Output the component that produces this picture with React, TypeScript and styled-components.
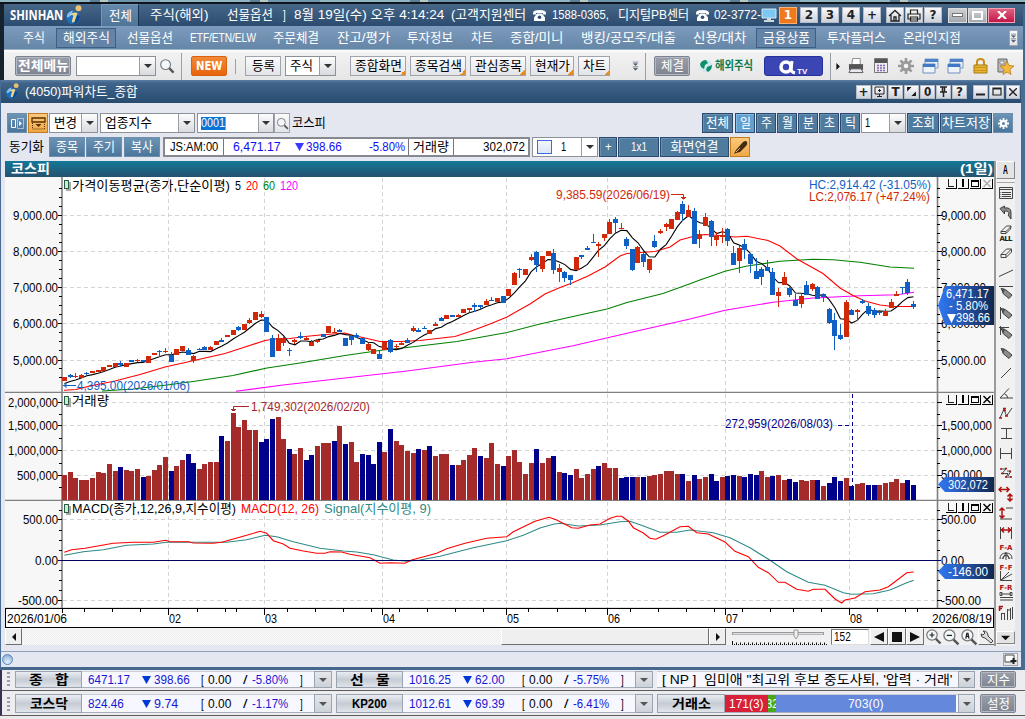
import React, { useLayoutEffect, useRef, useState } from 'react';
import styled, { createGlobalStyle, css } from 'styled-components';

const Global = createGlobalStyle`
  * { box-sizing: border-box; }
  html, body { margin: 0; padding: 0; background: #5f7f95; }
  body { overflow: hidden; font-family: 'Liberation Sans Narrow', 'Liberation Sans', 'Noto Sans CJK KR', sans-serif; font-size: 13px; color: #000; }
  svg { display: block; flex: none; }
`;

/* ---------- text ---------- */
const FitBox = styled.span<{ $w: number; $ml?: number; $c?: string; $b?: boolean; $size?: number }>`
  display: block; flex: none; width: ${p => p.$w}px; margin-left: ${p => p.$ml || 0}px; white-space: pre; line-height: 16px; height: 16px;
  ${p => p.$c && css`color: ${p.$c};`}
  ${p => p.$b && css`font-weight: 700;`}
  ${p => p.$size && css`font-size: ${p.$size}px;`}
`;
const FitInner = styled.span`display: inline-block; transform-origin: 0 50%;`;

type FitProps = { w: number; ml?: number; c?: string; b?: boolean; size?: number; children: string };
function Fit({ w, ml, c, b, size, children }: FitProps) {
  const ref = useRef<HTMLSpanElement>(null);
  const [scale, setScale] = useState(1);
  useLayoutEffect(() => {
    if (ref.current && ref.current.offsetWidth) setScale(w / ref.current.offsetWidth);
  }, [w, children]);
  return (
    <FitBox $w={w} $ml={ml} $c={c} $b={b} $size={size}>
      <FitInner ref={ref} style={{ transform: `scaleX(${scale})` }}>{children}</FitInner>
    </FitBox>
  );
}

/* ---------- shared parts ---------- */
type Box = { $w: number; $ml?: number; $h?: number };
const box = css<Box>`flex: none; width: ${p => p.$w}px; margin-left: ${p => p.$ml || 0}px; height: ${p => p.$h || 20}px;`;
const center = css`display: flex; align-items: center; justify-content: center;`;
const Space = styled.div<{ $w: number }>`flex: none; width: ${p => p.$w}px;`;

const Page = styled.div`width: 1025px; height: 719px; overflow: hidden; display: flex; flex-direction: column; background: #e9e9ee;`;
const Desktop = styled.div`height: 4px; flex: none; border-bottom: 2px solid #10151c; background: repeating-linear-gradient(90deg, #8fb4c2 0 90px, #5d7f95 90px 100px, #b9c7c2 100px 108px, #6f95ac 108px 160px);`;
const AppFrame = styled.div`height: 76px; flex: none; border-left: 4px solid #17222f; border-right: 2px solid #46688c;`;
const HeaderBar = styled.div`height: 22px; display: flex; align-items: center; padding-left: 6px; color: #fff; background: linear-gradient(#476788, #2b4c70);`;
const Logo = styled.div`width: 56px; flex: none; font-family: 'Open Sans', 'Noto Sans', sans-serif;`;
const ActiveTab = styled.div<Box>`${box} ${center} background: linear-gradient(#6489ac, #4f7599); border: 1px solid #7698b8; border-right-color: #152f4c; border-bottom: 0;`;
const SquareButton = styled.div<Box & { $hot?: boolean }>`${box} ${center} font-weight: 700; font-size: 12px; font-family: 'DejaVu Sans', sans-serif; color: ${p => (p.$hot ? '#fff' : '#222')}; border: 1px solid ${p => (p.$hot ? '#ffb070' : '#b5bcc9')}; background: ${p => (p.$hot ? '#ef7a1e' : 'linear-gradient(#fafafc, #cdd1da)')};`;
const WindowButton = styled.div<Box & { $close?: boolean }>`${box} ${center} border: 1px solid ${p => (p.$close ? '#f2a0b4' : '#dcdcdc')}; background: ${p => (p.$close ? 'linear-gradient(#e06080, #c01848)' : 'linear-gradient(#cfd2d6, #a2a8b0)')};`;

const MenuBar = styled.div`height: 24px; display: flex; align-items: center; color: #fff; background: linear-gradient(#7d9cbd, #6686a7); border-bottom: 1px solid #9db4ca;`;
const MenuBox = styled.div<Box>`${box} ${center} border: 1px solid #3d5f86; background: #6384a6;`;
const ToolBar = styled.div`height: 30px; display: flex; align-items: center; background: linear-gradient(#f2f2f2, #e6e6e6); border-top: 2px solid #fafafa;`;
const GreyButton = styled.div<Box>`${box} ${center} border: 1px solid #7d8491; border-radius: 2px; background: linear-gradient(#9a9fab, #7e8490); color: #fff; box-shadow: inset 0 0 0 1px #b4b8c2;`;
const NewButton = styled.div<Box>`${box} ${center} border: 1px solid #d9600f; background: linear-gradient(#f28a38, #e8640c); border-radius: 2px; font-family: 'DejaVu Sans', sans-serif;`;
const LightButton = styled.div<Box & { $corner?: boolean }>`${box} ${center} border: 1px solid #a0a4ae; background: linear-gradient(#fbfbfb, #e2e4e8);
  ${p => p.$corner && css`background: linear-gradient(135deg, transparent 0 50%, #e88a20 50%) right bottom / 5px 5px no-repeat, linear-gradient(#fbfbfb, #e2e4e8);`}`;
const Combo = styled.div<Box>`${box} display: flex; align-items: center; border: 1px solid #8c9097; background: #fff;`;
const Selected = styled.div`margin-left: 3px; background: #0a74d4; height: 13px; display: flex; align-items: center; border-right: 1px solid #e89040;`;
const Drop = styled.div<{ $flat?: boolean; $w?: number }>`${center} flex: none; width: ${p => p.$w || 16}px; height: 100%; margin-left: auto; border-left: 1px solid #9a9da5; background: ${p => (p.$flat ? '#fff' : 'linear-gradient(#fdfdfd, #d8dade)')};
  &::after { content: ''; border: 4px solid transparent; border-top: 4px solid #333; border-bottom: 0; }`;
const Divider = styled.div<Box>`${box} background: #9b9fa8;`;
const LogoTv = styled.div<Box>`${box} ${center} border-radius: 3px; border: 1px solid #24309c; background: #3b46b4;`;

/* ---------- chart window ---------- */
const Win = styled.div`height: 590px; flex: none; border-left: 1px solid #4a6c92; border-right: 4px solid #4a6c92; border-bottom: 3px solid #46688c; background: #e4e7ef; display: flex; flex-direction: column;`;
const WinTitle = styled.div`height: 23px; flex: none; display: flex; align-items: center; padding-left: 5px; color: #fff; background: linear-gradient(#5b7fa3, #41648a 3px, #284b70);`;
const Controls = styled.div<{ $h: number; $pt: number }>`height: ${p => p.$h}px; flex: none; padding-top: ${p => p.$pt}px; display: flex; align-items: flex-start;`;
const BlueButton = styled.div<Box & { $on?: boolean }>`${box} ${center} color: #fff; border: 1px solid #2c4a70; background: ${p => (p.$on ? '#62a0d0' : '#4f7b9f')}; box-shadow: inset 1px 1px 0 ${p => (p.$on ? '#86bbe4' : '#6890b0')};`;
const SoftButton = styled.div<Box>`${box} ${center} color: #fff; border: 1px solid #6d8fae; background: linear-gradient(#6c93b4, #4b769b);`;
const OrangeButton = styled.div<Box>`${box} ${center} border: 1px solid #c07c1e; background: linear-gradient(#fbc97c, #f0a848);`;
const QuoteBox = styled.div<Box>`${box} display: flex; align-items: center; border: 2px solid #868a90; background: #fff;`;
const QuoteCell = styled.div<{ $w: number; $last?: boolean }>`flex: none; width: ${p => p.$w}px; display: flex; align-items: center; height: 100%; border-right: ${p => (p.$last ? 0 : 1)}px solid #777;`;
const Swatch = styled.div`width: 15px; height: 14px; margin-left: 4px; border: 1px solid #3a6fe0; background: linear-gradient(#f4f6fb, #dde5f4);`;
const Lead = styled.div<Box>`${box} display: flex; align-items: center;`;

const Workspace = styled.div`display: flex; flex: none; height: 485px; padding-left: 4px;`;
const ChartColumn = styled.div`width: 989px; flex: none; display: flex; flex-direction: column;`;
const ChartTitle = styled.div`height: 16px; flex: none; display: flex; align-items: center; padding-left: 6px; color: #fff; background: linear-gradient(#147898, #25526f);`;
const ScrollRow = styled.div`height: 17px; display: flex; align-items: center; background: #f0f0f2;`;
const Raised = styled.div<Box>`${box} ${center} background: #efefef; border: 1px solid #fff; border-right-color: #6e6e6e; border-bottom-color: #6e6e6e;`;
const Track = styled.div<Box>`${box} background: repeating-conic-gradient(#fafafa 0 25%, #ededed 0 50%) 0 0 / 2px 2px;`;
const CountBox = styled.div<Box>`${box} display: flex; align-items: center; background: #fff; border: 1px solid #777; border-right-color: #ddd; border-bottom-color: #ddd;`;
const ToolStrip = styled.div`width: 21px; display: flex; flex-direction: column; align-items: center; background: #f1f1f1; border-left: 2px solid #9a9a9a;`;
const ToolCell = styled.div<{ $h: number }>`${center} height: ${p => p.$h}px; width: 19px; flex: none;`;
const StripButton = styled.div<{ $h: number }>`${center} height: ${p => p.$h}px; width: 19px; flex: none; background: #e4e4e4; border: 1px solid #fff; border-right-color: #888; border-bottom-color: #888;`;
const Rule = styled.div`height: 1px; width: 18px; background: #a8a8a8; flex: none;`;
const StatusBar = styled.div`flex: 1; margin-top: 5px; border-top: 1px solid #8da2ba; display: flex; align-items: center;`;
const Orb = styled.div`width: 11px; height: 11px; margin-left: 1px; border-radius: 50%; border: 1px solid #5b86b8; background: radial-gradient(circle at 50% 80%, #e8f3ff, #7ba5d2);`;

/* ---------- tickers ---------- */
const Ticker = styled.div<{ $h: number }>`height: ${p => p.$h}px; flex: none; display: flex; align-items: flex-end; padding-bottom: 2px; background: #ececf1; border-left: 2px solid #3a3050; padding-left: 3px; border-bottom: 1px solid #5d5d57;`;
const Grip = styled.div`width: 3px; height: 15px; margin: 0 0 1px 2px; flex: none; background: repeating-linear-gradient(#9a9da2 0 2px, transparent 2px 4px);`;
const TickerLabel = styled.div<Box>`${box} ${center} border: 1px solid #9aa3b0; background: linear-gradient(#e9edf2, #c6ccd5 50%, #e0e4ea);`;
const TickerBody = styled.div<Box>`${box} display: flex; align-items: center; background: #f6f7ff; border-top: 1px solid #c9ced8; border-bottom: 1px solid #a9b0bc;`;
const TickerDrop = styled.div<Box>`${box} ${center} border: 1px solid #9aa3b0; background: linear-gradient(#e4e7eb, #cdd2d9);
  &::after { content: ''; border: 4px solid transparent; border-top: 4px solid #555; border-bottom: 0; }`;
const Share = styled.div<{ $w: number; $bg: string }>`flex: none; width: ${p => p.$w}px; ${center} height: 100%; overflow: hidden; background: ${p => p.$bg}; color: #fff;`;

/* ---------- small drawings ---------- */
const ShinhanMark = ({ s }: { s: number }) => (
  <svg width={s} height={s * 1.25} viewBox="0 0 16 20">
    <circle cx="7" cy="12.500" r="6.800" fill="#1d6fc0" />
    <path d="M1 10q2-4 6-4.500l-2 5q-2 2-4 2z" fill="#7fc0ee" /><path d="M7 19q6-1 7-8l-3-1-3 6z" fill="#0d4890" />
    <path d="M4 9.500q4-3 7.500-1.500L8.500 17q-3 1.500-2.500-1.500l1.500-5z" fill="#f0d488" /><circle cx="12.500" cy="3.300" r="3" fill="#e8c274" />
  </svg>
);
const Magnifier = ({ s = 17, sign }: { s?: number; sign?: string }) => (
  <svg width={s} height={s} viewBox="0 0 17 17">
    <path d="M10 10l5.500 5.500" stroke="#555" strokeWidth="2.400" />
    <circle cx="7" cy="7" r="5.200" fill="#f3f8fc" stroke="#777" strokeWidth="1.200" />
    {sign && <path d={sign} stroke="#222" strokeWidth="1.200" fill="none" />}
  </svg>
);
const Gear = ({ c, s = 16, hole = '#eee' }: { c: string; s?: number; hole?: string }) => (
  <svg width={s} height={s} viewBox="0 0 16 16">
    <path d="M8 0v16M0 8h16M2.400 2.400l11.200 11.200M2.400 13.600L13.600 2.400" stroke={c} strokeWidth="2.600" />
    <circle cx="8" cy="8" r="5.200" fill={c} /><circle cx="8" cy="8" r="2.300" fill={hole} />
  </svg>
);
const Arrow = ({ d, s = 10 }: { d: string; s?: number }) => <svg width={s} height={s} viewBox="0 0 10 10"><path d={d} fill="#111" /></svg>;
const Chevrons = ({ c = '#4a5a70' }) => <svg width="7" height="10" viewBox="0 0 9 12"><path d="M1 1h7M2 3h5L4.500 5.500zM1 7h7M2 9h5L4.500 11.500z" stroke={c} strokeWidth=".8" fill={c} /></svg>;
const Phone = () => (
  <svg width="13" height="12" viewBox="0 0 13 12"><path d="M0 4q0-3 6.500-3T13 4v1.500h-3V4H3v1.500H0zM4 4.500h5l3 4V12H1V8.500z" fill="#fff" /><circle cx="6.500" cy="8.300" r="1.800" fill="#2f5074" /></svg>
);
const WindowsIcon = () => (
  <svg width="17" height="16" viewBox="0 0 17 16"><path d="M3 1h13v9H3z" fill="#e8eef6" stroke="#7f9dc4" /><path d="M3 1h13v3H3z" fill="#4f83c8" /><path d="M1 6h12v9H1z" fill="#eef3f9" stroke="#6f90bd" /><path d="M1 6h12v3H1z" fill="#3f78c4" /></svg>
);

/* ---------- chart data ---------- */
type Pt = [number, number];
const COUNT = 152;
const barX = (i: number) => 64.4 + 5.6235 * i;

/* colour, body top, body bottom, wick top, wick bottom; in thirds of a pixel below y = 160 */
const candleText = `r 651 662,b 646 650 641 654,r 647 651 638 654,r 645 653 642 654,b 638 641 635 645,r 632 638,r 629 636,r 621 633,r 614 621,r 609 621,b 608 614 604 621,r 609 620,b 599 605,r 599 603 596 606,b 599 605,r 588 608,r 579 585,b 573 577 570 591,r 572 577 564 579,b 585 606 575 606,r 566 586,r 558 572,b 570 584 563 584,r 588 602 585 608,b 567 571 564 571,b 561 570 558 570,r 561 570 558 570,r 543 555,b 541 546 534 546,r 525 531,r 510 525,b 501 510 497 513,r 492 510,r 479 488 474 491,r 456 480,r 461 471 453 474,b 471 516,b 534 591 525 591,r 534 573 522 573,r 534 549 531 558,b 570 574 563 588,r 540 547 536 552,b 528 534 516 537,r 534 540 531 540,r 546 557 540 557,r 540 546 537 549,b 522 531,r 498 519,r 515 519 504 519,b 510 516 507 516,b 534 558,b 527 539 524 555,b 525 530 519 533,b 534 552,r 552 570 549 573,r 567 582,b 582 597 573 597,r 545 569,b 540 576 537 579,r 557 561 551 566,r 549 554 545 554,b 541 550 534 550,r 504 512 497 515,b 509 516 505 516,b 504 508 498 508,r 510 521,r 491 497 486 497,b 474 483 471 483,r 465 477,b 465 470,r 465 470 461 470,r 447 459,r 444 450 444 456,b 435 440 429 455,b 436 441 435 448,r 423 435 417 435,b 420 423 411 423,r 414 426,b 408 429,r 387 408,r 339 375 335 375,b 326 330 324 354,r 327 345,r 291 300 282 303,b 276 315 273 336,r 288 327 288 336,r 273 288,b 279 330 267 342,r 324 336 312 366,b 336 354 333 366,b 345 360 345 375,r 291 329,b 285 292 285 297,b 264 270 258 270,b 246 249 222 249,r 252 258 246 291,r 222 234 222 243,r 186 222 177 222,b 177 189 170 219,r 204 208 189 208,b 237 258 231 267,b 267 330 267 333,r 261 309 258 309,b 282 306 273 321,r 297 330 297 339,b 243 261 225 264,r 213 218 207 222,r 192 201 189 213,r 177 207,r 156 180 153 180,b 132 162 123 184,r 150 171 135 171,b 153 252 144 252,r 222 237 210 264,r 171 198 160 198,b 182 231 180 258,r 228 240 216 258,r 224 230 204 249,b 207 243 204 258,b 279 315 258 315,r 264 303 258 339,b 252 270 237 297,b 282 312 279 339,b 333 357 294 357,b 327 351 321 375,b 321 333 300 333,b 336 405 324 405,r 396 408 384 441,r 351 375 336 375,b 384 405 381 411,b 420 438 402 438,r 408 432 399 444,b 375 405 363 405,r 372 387 369 393,b 381 417 378 417,b 402 412 402 426,b 447 489 444 492,b 480 528 459 570,b 525 537 492 540,r 426 531 420 531,b 450 465 447 465,r 451 455 447 482,b 423 428 417 432,b 438 462 429 468,b 450 465 444 474,b 455 459 450 465,r 453 468 447 468,r 426 444 417 444,r 402 407 393 407,b 381 385 381 402,b 366 399 357 405,b 432 441 423 447`;
const candles = candleText.split(',').map(t => {
  const [c, ...n] = t.split(' ');
  const [a, b, h = a, l = b] = n.map(Number);
  const y = (v: number) => 160 + v / 3;
  return { up: c === 'r', top: Math.round(y(a)), bottom: Math.max(Math.round(y(b)), Math.round(y(a)) + 1), high: Math.round(y(h)), low: Math.round(y(l)) };
});

/* bar tops in thirds of a pixel below y = 390; "b" marks a falling session */
const volumes = `255 246 264 270 270 264 246 249 222 243 231b 240 243 237 261b 258 240 225 201 243b 228 210 192b 219b 237 222 216 216 138b 153 69 111 90 120 120 156b 147b 87b 81 147 177b 192 174 210b 195b 168 159 159 153b 108 162b 156 216 192b 195b 222b 156b 186 117b 153 165 183 189 177b 180 168b 198 192 192 225b 225 210 195 174 198b 204 159 222 228b 198 180 216 252 219 177b 219 204 198b 246 249b 255b 237 264 252 237 228b 219 234 234 264b 261b 261b 261 261b 258 255 252 243 243 252 252b 273 255b 267 261 252b 273b 261 258b 255b 258 261b 252b 255b 243 261 258b 255 270 267b 276b 270 273 270 270b 288 279b 261b 273b 264 288b 282 279 285b 285b 285 279 276 267 279 270b 285b`
  .split(' ').map(t => ({ down: t.endsWith('b'), top: Math.round(390 + parseInt(t, 10) / 3) }));

const seg = (dx: number, dy: number, flat: number[]): Pt[] => {
  const out: Pt[] = [];
  for (let i = 0; i < flat.length; i += 2) out.push([dx + flat[i] / 3, dy + flat[i + 1] / 3]);
  return out;
};
const px = (...flat: number[]) => { const out: Pt[] = []; for (let i = 0; i < flat.length; i += 2) out.push([flat[i], flat[i + 1]]); return out; };
const closes = candles.map(c => (c.up ? c.top : c.bottom));
const ma5: Pt[] = closes.map((_, i) => [barX(i), i < 4 ? [383.5, 381.5, 380, 378][i] : closes.slice(i - 4, i + 1).reduce((a, b) => a + b, 0) / 5]);
const ma20 = px(64, 390.3, 76, 389.5, 90, 386, 115, 381, 140, 374.5, 165, 367, 183, 363, 205, 358, 225, 353.5, 245, 347, 265, 340.5, 275, 339, 290, 338.5, 305, 336.5, 320, 335, 333, 334, 345, 333, 352, 335, 365, 338, 380, 341.5, 400, 341.5, 420, 340.5, 437, 338.5, 455, 336.5, 470, 331.5, 490, 324, 507, 317, 530, 304, 545, 294, 560, 287.5, 572, 283, 588, 276, 605, 267, 620, 256, 627, 253.5, 640, 252.5, 655, 251.5, 670, 247, 680, 240, 693, 236.5, 705, 234.5, 725, 236, 735, 237, 747, 236.3, 768, 240.5, 780, 246, 797, 259, 823, 273.5, 840, 288, 853, 295.5, 865, 301, 880, 305, 893, 306.5, 914, 306.5);
const ma60 = px(102, 391, 133, 389, 167, 385, 193, 381.5, 233, 375.5, 267, 368, 300, 363, 345, 355.5, 383, 350, 407, 347.5, 457, 341.5, 507, 332.5, 540, 324, 573, 316.5, 607, 309, 627, 302.5, 663, 293.5, 690, 283.8, 700, 280, 725, 271.3, 747, 266, 780, 261.3, 813, 259.3, 833, 259.7, 860, 262.3, 890, 267, 914, 268.3);
const ma120 = px(236, 391.3, 283, 385, 345, 378, 407, 371, 473, 362.3, 507, 358.7, 573, 345.7, 627, 333.3, 690, 319, 725, 310.3, 773, 302.3, 813, 298, 860, 295.7, 897, 294.7, 914, 292.3);
const macd = [
  ...seg(0, 390, [193, 487, 215, 479, 255, 475, 340, 460, 400, 457, 460, 457, 497, 451, 510, 455, 565, 455, 580, 459, 640, 460, 665, 457, 700, 447, 740, 436, 780, 424, 800, 430, 820, 452, 850, 462, 870, 475, 910, 483, 950, 490, 975, 490, 990, 485, 1025, 486]),
  ...seg(340, 390, [30, 493, 90, 503, 120, 520, 150, 518, 195, 520, 215, 510, 290, 490, 320, 476, 375, 460, 440, 445, 500, 440, 520, 425, 585, 394, 627, 382, 650, 390, 695, 413, 715, 415, 750, 405, 780, 402, 810, 385, 830, 379, 845, 379, 865, 393, 880, 413, 910, 429, 930, 445, 947, 448, 970, 437, 1020, 410]),
  ...seg(680, 390, [25, 409, 50, 428, 85, 432, 135, 456, 165, 484, 205, 500, 235, 532, 265, 548, 295, 577, 315, 577, 350, 598, 385, 604, 400, 598, 435, 598, 465, 627, 485, 639, 495, 630, 525, 624, 555, 605, 600, 600, 625, 590, 645, 575, 680, 548, 701, 546]),
];
const signal = [
  ...seg(0, 390, [193, 496, 250, 485, 310, 479, 380, 466, 460, 462, 500, 457, 680, 457, 740, 449, 795, 436, 830, 440, 880, 455, 960, 475, 1030, 483]),
  ...seg(340, 390, [50, 486, 100, 494, 160, 510, 200, 514, 240, 510, 300, 499, 400, 473, 500, 452, 550, 436, 600, 414, 640, 403, 660, 400, 715, 408, 780, 405, 840, 395, 870, 394, 900, 404, 960, 427, 1010, 427]),
  ...seg(680, 390, [30, 420, 100, 428, 150, 443, 210, 473, 270, 511, 320, 545, 385, 577, 435, 586, 490, 608, 515, 613, 580, 611, 630, 600, 680, 578, 701, 571]),
];
const line = (pts: Pt[]) => pts.map(p => p.map(v => v.toFixed(1)).join(',')).join(' ');
const months: [number, string][] = [[168.5, '02'], [264.5, '03'], [382.5, '04'], [506.5, '05'], [607.5, '06'], [725.5, '07'], [849.5, '08']];

const L = ({ x, y, w, c = '#000', children }: { x: number; y: number; w: number; c?: string; children: string }) => (
  <text x={x} y={y} fill={c} fontSize="13" textLength={w} lengthAdjust="spacingAndGlyphs" xmlSpace="preserve">{children}</text>
);

function PaneFrame({ top, bottom, grid, minor, grey }: { top: number; bottom: number; grid: number[]; minor: number[]; grey?: boolean }) {
  return (
    <g>
      <rect x="5" y={top} width="989" height={bottom - top} fill="#fff" />
      <rect x="5" y={top} width="57" height={bottom - top} fill="#f7f7f7" />
      <rect x="938" y={top} width="56" height={bottom - top} fill="#f7f7f7" />
      <g stroke="#d3d3d3" strokeDasharray="4 3" shapeRendering="crispEdges">
        {months.map(([x]) => <path key={x} d={`M${x} ${top + 1}V${bottom}`} />)}
        {grid.map(y => <path key={y} d={`M63 ${y}H937`} />)}
      </g>
      <path d={`M62 ${top}V${bottom}M937.500 ${top}V${bottom}`} stroke="#808080" strokeWidth="1.600" />
      <path d={[...grid.map(y => `M58 ${y}h4M937 ${y}h5`), ...minor.map(y => `M59 ${y}h3M937 ${y}h3`)].join('')} stroke="#000" shapeRendering="crispEdges" />
      <path d={`M5 ${bottom - 0.5}H994`} stroke="#808080" strokeWidth="1.600" />
      {[945.5, 957.5, 969.5, 981.5].map((x, i) => {
        const y = top + 2;
        return (
          <g key={x} fill="none" shapeRendering="crispEdges">
            <path d={`M${x} ${y + 9.5}h11v-10`} stroke="#000" />
            {i === 0 && <path d={`M${x + 3} ${y}v7.500h5`} stroke="#222" />}
            {i === 1 && <path d={`M${x + 5} ${y}v8`} stroke="#000" strokeWidth="2" />}
            {i === 2 && <path d={`M${x + 2} ${y + 1}h7v6.500h-7zM${x + 2} ${y + 2}h7`} stroke="#000" />}
            {i === 3 && <path d={`M${x + 2} ${y + 1}l7 7m0-7l-7 7`} stroke={grey ? '#aaa' : '#000'} strokeWidth="1.400" shapeRendering="auto" />}
          </g>
        );
      })}
      <rect x="66" y={top + 5} width="5" height="9" fill="#aaa" />
      <rect x="64.500" y={top + 3.5} width="4" height="8" fill="#bff5c4" stroke="#2d5a4c" />
    </g>
  );
}

const ticks = (from: number, to: number, step: number) => { const r: number[] = []; for (let v = from; v < to; v += step) r.push(v); return r; };
const priceGrid = [215.5, 251.5, 287.5, 323.5, 360.5];

function PriceTag({ top, bottom, id }: { top: number; bottom: number; id: string }) {
  const mid = (top + bottom) / 2;
  return (
    <g>
      <defs><linearGradient id={id}><stop offset="0" stopColor="#2f78f4" /><stop offset=".3" stopColor="#2a63c8" /><stop offset="1" stopColor="#11264c" /></linearGradient></defs>
      <path d={`M938 ${mid}L945 ${top}H994V${bottom}H945z`} fill={`url(#${id})`} />
    </g>
  );
}

function PricePane() {
  return (
    <svg width="989" height="216" viewBox="5 177 989 216">
      <PaneFrame top={177} bottom={393} grid={priceGrid} minor={ticks(188.5, 386, 9).filter(v => Math.min(...priceGrid.map(g => Math.abs(g - v))) > 2)} grey />
      {['9,000.00', '8,000.00', '7,000.00', '6,000.00', '5,000.00'].map((t, i) => {
        const y = [220, 256, 292, 328, 365][i];
        return <g key={t}><L x={13} y={y} w={45}>{t}</L><L x={941} y={y} w={45}>{t}</L></g>;
      })}
      <g fill="none" strokeWidth="1.100">
        <polyline points={line(ma120)} stroke="#f0f" />
        <polyline points={line(ma60)} stroke="#008000" />
        <polyline points={line(ma20)} stroke="#f00" />
        <polyline points={line(ma5)} stroke="#000" />
      </g>
      <g shapeRendering="crispEdges">
        {candles.map((c, i) => {
          const x = Math.round(barX(i) - 0.5);
          return (
            <g key={i} fill={c.up ? '#d02808' : '#1060c4'}>
              <rect x={x} y={c.high} width="1" height={c.low - c.high} />
              <rect x={x - 2} y={c.top} width="5" height={c.bottom - c.top} />
            </g>
          );
        })}
      </g>
      <L x={72} y={190} w={158}>가격이동평균(종가,단순이평)</L>
      <L x={235} y={190} w={6}>5</L><L x={246} y={190} w={12} c="#f00">20</L><L x={263} y={190} w={12} c="#008000">60</L><L x={280} y={190} w={18} c="#f0f">120</L>
      <L x={556} y={199} w={114} c="#d02808">9,385.59(2026/06/19)</L>
      <path d="M671 194.500h12.500v5M681 197.500h5M682 198.500h3" stroke="#d02808" fill="none" />
      <L x={809} y={189} w={122} c="#1060c4">HC:2,914.42 (-31.05%)</L>
      <L x={809} y={201} w={121} c="#d02808">LC:2,076.17 (+47.24%)</L>
      <L x={77} y={390} w={113} c="#1060c4">4,395.00(2026/01/06)</L>
      <path d="M63 385.500h13M66 383v5M65 384v3" stroke="#1060c4" fill="none" />
      <PriceTag top={286} bottom={325} id="tagPrice" />
      <L x={946} y={298} w={43} c="#fff">6,471.17</L><L x={949} y={310} w={39} c="#fff">- 5.80%</L>
      <path d="M947 314h9l-4.500 9z" fill="#fff" /><L x={956} y={322} w={34} c="#fff">398.66</L>
    </svg>
  );
}

function VolumePane() {
  return (
    <svg width="989" height="108" viewBox="5 393 989 108">
      <PaneFrame top={393} bottom={501} grid={[402.5, 425.5, 450.5, 475.5]} minor={[414.5, 438.5, 463.5, 487.5]} />
      <L x={8} y={407} w={50}>2,000,000</L><L x={8} y={430} w={50}>1,500,000</L><L x={8} y={455} w={50}>1,000,000</L><L x={17} y={480} w={41}>500,000</L>
      <L x={941} y={430} w={51}>1,500,000</L><L x={941} y={455} w={51}>1,000,000</L><L x={941} y={479} w={41}>500,000</L>
      <g shapeRendering="crispEdges">
        {volumes.slice(0, COUNT).map((v, i) => <rect key={i} x={Math.round(barX(i) - 0.5) - 2} y={v.top} width="5" height={500 - v.top} fill={v.down ? '#00008b' : '#a52a2a'} />)}
      </g>
      <L x={72} y={405} w={37}>거래량</L>
      <L x={251} y={411} w={119} c="#a52a2a">1,749,302(2026/02/20)</L>
      <path d="M249 406.500h-15.500v4M231 409.500h5M232 410.500h3" stroke="#a52a2a" fill="none" />
      <L x={725} y={428} w={108} c="#00008b">272,959(2026/08/03)</L>
      <path d="M838 425.500h15M852.500 394v92" stroke="#00008b" strokeDasharray="4 3" fill="none" />
      <PriceTag top={477} bottom={492} id="tagVolume" /><L x={948} y={489} w={40} c="#fff">302,072</L>
    </svg>
  );
}

function MacdPane() {
  return (
    <svg width="989" height="107" viewBox="5 501 989 107">
      <PaneFrame top={501} bottom={609} grid={[519.5, 600.5]} minor={[510.5, 530.5, 540.5, 550.5, 570.5, 580.5, 590.5]} />
      <L x={23} y={524} w={35}>500.00</L><L x={35} y={565} w={23}>0.00</L><L x={18} y={605} w={40}>-500.00</L>
      <L x={941} y={524} w={35}>500.00</L><L x={941} y={565} w={23}>0.00</L><L x={941} y={605} w={40}>-500.00</L>
      <g fill="none" strokeWidth="1.100">
        <polyline points={line(signal)} stroke="#2f8a86" />
        <polyline points={line(macd)} stroke="#f00" />
      </g>
      <path d="M58 560.500H941" stroke="#000060" />
      <L x={72} y={513} w={164}>MACD(종가,12,26,9,지수이평)</L><L x={241} y={513} w={78} c="#f00">MACD(12, 26)</L><L x={324} y={513} w={107} c="#2f8a86">Signal(지수이평, 9)</L>
      <PriceTag top={564} bottom={579} id="tagMacd" /><L x={948} y={576} w={40} c="#fff">-146.00</L>
    </svg>
  );
}

function TimeAxis() {
  const minor = [84, 112, 140, 197, 225, 236, 287, 315, 343, 371, 399, 427, 455, 483, 528, 557, 585, 630, 658, 686, 714, 742, 770, 793, 821, 877, 905, 917];
  return (
    <svg width="989" height="20" viewBox="5 608 989 20">
      <rect x="5.500" y="608.500" width="988" height="19" fill="#fff" stroke="#000" />
      <path d={[...minor.map(x => `M${x + 0.5} 609v3`), ...months.map(([x]) => `M${x} 609v6`), 'M62.500 609v4'].join('')} stroke="#000" />
      <L x={7} y={623} w={60}>2026/01/06</L>
      {months.map(([x, t]) => <L key={t} x={x + 0.5} y={623} w={12}>{t}</L>)}
      <L x={932} y={623} w={60}>2026/08/19</L>
    </svg>
  );
}

/* drawing tools, each on a 16px grid: dark strokes, red strokes, caption, grey body */
type Tool = { d?: string; r?: string; t?: string; f?: string };
const PEN = 'M4.500 4.500L8 5l6 5-3 3.500L5 8.500z';
const PEN_TIP = 'M3 3.500l3.500.500L5 7.500z';
const tools: Tool[] = [
  { d: 'M1.500 2.500h13v11h-13zM1 4.500h14M4 7.500h9M4 9.500h9M4 11.500h9M2.500 7.500h.8M2.500 9.500h.8M2.500 11.500h.8' },
  { f: 'M2 3.500L6.500 1v2q6-1 6.500 4v7l-3-4 1-1q0-3-4.500-3v3z' },
  { d: 'M3 6.500L8.500 1H13l-.5 3L8 8.500H3zM3 6.500h5l5-5M8 6.500v2', t: 'ALL' },
  { d: 'M3 9.500L8.500 4H13.500v3L8 12.500H3zM3 9.500h5l5.500-5.500M8 9.500v3' },
  { d: 'M1 11.500L15 5' },
  { d: `M1 1.500h14${PEN_TIP}`, f: PEN },
  { d: `M2.500 2v12${PEN_TIP}`, f: PEN },
  { d: `M1 2.500h10M2.500 1v9${PEN_TIP}`, f: PEN },
  { d: PEN_TIP, f: PEN },
  { d: 'M3 13L13 3' },
  { d: 'M11 3.500L2 13h13M6.500 9q3.500 1 3 4' },
  { d: 'M2 13l4-9 2.500 7L14 3', r: 'M1 13h3M5 3.500h3M7 11h3M5 5.500h3' },
  { d: 'M3 3.500h11M8.500 3v10M3 13.500h11' },
  { d: 'M2.500 3v11M13.500 3v11M2 8.500h12' },
  { d: 'M3 4h5L4 8.500h6L8 12h5M9 6h4l-3 5', r: 'M2 4h2M7 3.500h2M3 8.500h3M11 6.500h2M7 12h2M12 12h2' },
  { r: 'M1 4.500h10M3.500 2L1 4.500 3.500 7M8.500 2L11 4.500 8.500 7M12 9v7M9.500 11.500L12 9l2.500 2.500M9.500 13.500L12 16l2.500-2.500' },
  { d: 'M8 3h7M2 14h12', r: 'M4 3v10M1.500 5.500L4 3l2.500 2.500M1.500 10.500L4 13l2.500-2.500' },
  { d: 'M2.500 2v12M13.500 2v12', r: 'M3 5h10M6 2.500L3.500 5 6 7.500M10 2.500L12.500 5 10 7.500' },
  { d: 'M2 14q0-6 6-6t6 6M5 14q0-3.500 3-3.500t3 3.500M8 7v8M4 14l4-6 4 6', t: 'F-A' },
  { d: 'M2.500 6v9.500H14M3 15L14 9M3 15l8-8', t: 'F-F' },
  { d: 'M3 9h10M2 7.500v3h2v-3zM12 7.500v3h2v-3zM2 12.500h13M2 15h13', t: 'F-R' },
  { d: 'M3.500 8v7M6.500 8v7M9.500 4v11M12.500 3v12M14.500 2v12M3 8.500h3M9 5h3', r: 'M1.500 1v5M1 1.500h4M1 3.500h3' },
];

function ToolIcon({ tool: { d, r, t, f } }: { tool: Tool }) {
  const all = t === 'ALL';
  return (
    <svg width="16" height="18" viewBox="0 -1 16 18">
      {f && <path d={f} stroke="#333" strokeWidth=".9" fill="#8c8c8c" />}
      {d && <path d={d} stroke="#444" fill="none" strokeWidth="1" />}
      {r && <path d={r} stroke="#b01010" fill="none" strokeWidth="1.500" />}
      {t && <text x="1.500" y={all ? 16 : 5} fontSize="7" fontWeight="700" fill={all ? '#222' : '#b01010'} fontFamily="DejaVu Sans" textLength="13">{t}</text>}
    </svg>
  );
}

function Quote({ last, ml, lw, diff, diffW, rate }: { last: string; ml: number; lw: number; diff: string; diffW: number; rate: string }) {
  return (
    <>
      <Fit w={lw} ml={ml} c="#1818d0">{last}</Fit>
      <Space $w={54 - lw} />
      <svg width="9" height="8" viewBox="0 0 9 8"><path d="M0 0h9L4.500 8z" fill="#0038d8" /></svg>
      <Fit w={diffW} ml={3} c="#1818d0">{diff}</Fit>
      <Fit w={3} ml={47 - diffW}>[</Fit><Fit w={23} ml={4}>0.00</Fit><Fit w={5} ml={12}>/</Fit>
      <Fit w={36} ml={4} c="#1818d0">{rate}</Fit><Fit w={3} ml={12}>]</Fit>
    </>
  );
}

const periods: [string, number, number][] = [['일', 20, 2], ['주', 20, 1], ['월', 20, 1], ['분', 20, 1], ['초', 20, 1], ['틱', 20, 1]];
const menuItems: [string, number, number][] = [['선물옵션', 11, 46], ['ETF/ETN/ELW', 17, 66], ['주문체결', 17, 46], ['잔고/평가', 18, 53], ['투자정보', 17, 46], ['차트', 18, 22], ['종합/미니', 17, 53], ['뱅킹/공모주/대출', 18, 95], ['신용/대차', 17, 53]];
const shortcuts: [string, number, number][] = [['종합화면', 56, 14], ['종목검색', 56, 4], ['관심종목', 56, 4], ['현재가', 44, 4], ['차트', 32, 4]];

export default function App() {
  return (
    <Page>
      <Global />
      <Desktop />
      <AppFrame>
        <HeaderBar>
          <Logo><Fit w={53} b size={14}>SHINHAN</Fit></Logo>
          <ShinhanMark s={16} />
          <ActiveTab $w={38} $ml={19} $h={22}><Fit w={23}>전체</Fit></ActiveTab>
          <Fit w={59} ml={11}>주식(해외)</Fit><Fit w={46} ml={18}>선물옵션</Fit><Fit w={3} ml={10}>]</Fit>
          <Fit w={150} ml={8}>8월 19일(수) 오후 4:14:24</Fit><Fit w={75} ml={7}>(고객지원센터</Fit>
          <Space $w={7} /><Phone />
          <Fit w={57} ml={6}>1588-0365,</Fit><Fit w={71} ml={9}>디지털PB센터</Fit>
          <Space $w={7} /><Phone /><Fit w={47} ml={5}>02-3772-</Fit>
          <svg width="16" height="14" viewBox="0 0 16 14"><path d="M1 1h14v9H1z" fill="#7cc8f4" stroke="#d4e6f2" /><path d="M6 10h4v2h3v2H3v-2h3z" fill="#cdd6df" /></svg>
          <SquareButton $w={18} $ml={2} $h={17} $hot>1</SquareButton>
          {['2', '3', '4', '+'].map(t => <SquareButton key={t} $w={18} $ml={3} $h={16}>{t}</SquareButton>)}
          <SquareButton $w={18} $ml={5} $h={16}><svg width="14" height="13" viewBox="0 0 14 13"><path d="M1 7l6-5.500L13 7M3 6v6h8V6M6 12V8h2v4" fill="none" stroke="#222" strokeWidth="1.300" /></svg></SquareButton>
          <SquareButton $w={18} $ml={1} $h={16}><svg width="14" height="13" viewBox="0 0 14 13"><path d="M3.500 5V1h7v4M1 5h12v5H1zM3.500 8h7v4h-7z" fill="#eee" stroke="#222" strokeWidth="1.200" /></svg></SquareButton>
          <SquareButton $w={18} $ml={1} $h={16}>?</SquareButton>
          <WindowButton $w={19} $ml={6} $h={15}><svg width="11" height="4"><rect x=".5" y=".5" width="10" height="3" fill="#fff" stroke="#777" /></svg></WindowButton>
          <WindowButton $w={19} $ml={1} $h={15}><svg width="11" height="9"><rect x="1" y="1" width="9" height="7" fill="none" stroke="#fff" strokeWidth="2" /></svg></WindowButton>
          <WindowButton $w={27} $ml={1} $h={15} $close><svg width="10" height="8" viewBox="0 0 10 8"><path d="M1 0l8 8M9 0L1 8" stroke="#fff" strokeWidth="2.200" /></svg></WindowButton>
        </HeaderBar>
        <MenuBar>
          <Fit w={22} ml={19}>주식</Fit>
          <MenuBox $w={60} $ml={11}><Fit w={47}>해외주식</Fit></MenuBox>
          {menuItems.map(([t, ml, w]) => <Fit key={t} w={w} ml={ml}>{t}</Fit>)}
          <MenuBox $w={60} $ml={10}><Fit w={47}>금융상품</Fit></MenuBox>
          <Fit w={59} ml={11}>투자플러스</Fit><Fit w={58} ml={17}>온라인지점</Fit>
          <LightButton $w={9} $ml={48} $h={16}><Chevrons /></LightButton>
        </MenuBar>
        <ToolBar>
          <GreyButton $w={56} $ml={11}><Fit w={51} b>전체메뉴</Fit></GreyButton>
          <Combo $w={80} $ml={5}><Drop /></Combo>
          <Space $w={3} /><Magnifier s={16} />
          <Divider $w={1} $ml={6} $h={27} />
          <NewButton $w={36} $ml={9}><Fit w={26} b size={12} c="#fff">NEW</Fit></NewButton>
          <Divider $w={1} $ml={8} $h={15} />
          <LightButton $w={36} $ml={9}><Fit w={23}>등록</Fit></LightButton>
          <Combo $w={51} $ml={4}><Fit w={23} ml={4}>주식</Fit><Drop /></Combo>
          {shortcuts.map(([t, w, ml]) => <LightButton key={t} $w={w} $ml={ml} $corner><Fit w={w - 9}>{t}</Fit></LightButton>)}
          <Space $w={22} /><Chevrons />
          <Divider $w={1} $ml={6} $h={27} />
          <GreyButton $w={36} $ml={8}><Fit w={23}>체결</Fit></GreyButton>
          <Space $w={9} />
          <svg width="14" height="14" viewBox="0 0 14 14"><circle cx="7" cy="7" r="6.500" fill="#cfe9ee" /><path d="M1 5q2-4 6-4l2 3-3 2-1 4-3-2zM8 8l5-2q0 5-4 7l-2-2z" fill="#0e8f6c" /></svg>
          <Fit w={38} ml={2} b c="#087a4c" size={12}>해외주식</Fit>
          <LogoTv $w={59} $ml={11}>
            <svg width="34" height="17" viewBox="0 0 34 17"><circle cx="9" cy="9" r="5" fill="none" stroke="#fff" strokeWidth="3.600" /><path d="M15 3l-1 8q0 3 4 4" stroke="#fff" strokeWidth="3" fill="none" /><text x="20" y="16" fontSize="8" fontWeight="700" fill="#fff" fontFamily="Liberation Sans">TV</text></svg>
          </LogoTv>
          <Divider $w={1} $ml={7} $h={27} />
          <Space $w={4} /><Arrow d="M2 0l5 5-5 5z" s={7} />
          <Space $w={6} />
          <svg width="16" height="16" viewBox="0 0 17 16"><path d="M5 0h8v7H4z" fill="#fff" stroke="#888" /><path d="M1 6h15v6H1z" fill="#555" /><path d="M3 11h11l2 4H1z" fill="#e8eaf0" stroke="#555" /></svg>
          <Space $w={9} />
          <svg width="16" height="16" viewBox="0 0 16 16"><path d="M1.500.5h13v14h-13z" fill="#eee" stroke="#777" /><path d="M2 1h12v4H2z" fill="#555" /><path d="M4 7.500h9M4 10h9M4 12.500h9" stroke="#8060b8" strokeDasharray="2 1" strokeWidth="1.500" /></svg>
          <Space $w={9} /><Gear c="#9a9a9a" hole="#f4f4f4" />
          <Space $w={8} /><WindowsIcon /><Space $w={8} /><WindowsIcon />
          <Space $w={9} />
          <svg width="15" height="16" viewBox="0 0 15 16"><path d="M4 7V4q0-3 3.500-3T11 4v3" fill="none" stroke="#c8901c" strokeWidth="2" /><path d="M1 7h13v8H1z" fill="#e8b530" stroke="#a87814" /><path d="M1 9.500h13M1 12.500h13" stroke="#c8921e" /></svg>
          <Space $w={9} />
          <svg width="17" height="17" viewBox="0 0 17 17"><path d="M1 1h9v13H1z" fill="#bbb" stroke="#666" /><path d="M3 3h4v3H3z" fill="#eee" stroke="#777" strokeWidth=".7" /><path d="M10 3l2 4.500 5 .5-4 3.500 1 5-4-2.500-4 2.500 1-5L3 8l5-.500z" fill="#f4b840" stroke="#b97f14" strokeWidth=".8" /></svg>
        </ToolBar>
      </AppFrame>

      <Win>
        <WinTitle>
          <ShinhanMark s={13} />
          <Fit w={113} ml={6}>(4050)파워차트_종합</Fit>
          <SquareButton $w={15} $ml={718} $h={14}>+</SquareButton>
          <SquareButton $w={15} $ml={1} $h={14}><svg width="11" height="11" viewBox="0 0 11 11"><path d="M1 1h9v7H1zM5.500 3v3M4 4.500h3M5.500 8v2M3 10.500h5" fill="none" stroke="#222" /></svg></SquareButton>
          <SquareButton $w={15} $ml={1} $h={14}><Fit w={8} b>T</Fit></SquareButton>
          <SquareButton $w={15} $ml={1} $h={14}><Arrow d="M1 1h4L1 5zM9 9V5L5 9z" s={11} /></SquareButton>
          <SquareButton $w={15} $ml={1} $h={14}><Fit w={7} b>0</Fit></SquareButton>
          <SquareButton $w={15} $ml={1} $h={14}><svg width="9" height="11" viewBox="0 0 9 11"><path d="M1 1h7M3.500 1v5M5.500 1v5M1 6h7M4.500 6v5" stroke="#222" strokeWidth="1.500" /></svg></SquareButton>
          <SquareButton $w={15} $ml={1} $h={14}>?</SquareButton>
          <SquareButton $w={15} $ml={6} $h={14}><svg width="9" height="8"><path d="M0 6.500h9" stroke="#222" strokeWidth="2" /></svg></SquareButton>
          <SquareButton $w={15} $ml={1} $h={14}><svg width="10" height="9"><path d="M1 1h8v7H1zM1 2h8" fill="none" stroke="#222" strokeWidth="1.200" /></svg></SquareButton>
          <SquareButton $w={14} $ml={2} $h={14}><svg width="8" height="8"><path d="M0 0l8 8M8 0L0 8" stroke="#222" strokeWidth="1.400" /></svg></SquareButton>
        </WinTitle>
        <Controls $h={34} $pt={10}>
          <SoftButton $w={20} $ml={6}><svg width="15" height="13" viewBox="0 0 15 13"><path d="M1.500 2.500h4v8h-4z" fill="none" stroke="#fff" /><path d="M7.500 1.500h6v10h-6z" fill="none" stroke="#fff" strokeDasharray="1 1" /><path d="M9 4l3 2.500L9 9z" fill="#fff" /></svg></SoftButton>
          <OrangeButton $w={20} $ml={1}><svg width="15" height="13" viewBox="0 0 15 13"><path d="M1 1h13v4H1z" fill="none" stroke="#5a3000" strokeWidth="1.300" /><path d="M1.500 6v6h12V6" fill="none" stroke="#5a3000" strokeDasharray="1 1" /><path d="M4.500 7h6l-3 3z" fill="#5a3000" /></svg></OrangeButton>
          <Combo $w={49} $ml={1}><Fit w={23} ml={4}>변경</Fit><Drop /></Combo>
          <Combo $w={95} $ml={2}><Fit w={47} ml={4}>업종지수</Fit><Drop /></Combo>
          <Combo $w={77} $ml={2}><Selected><Fit w={24} c="#fff">0001</Fit></Selected><Drop $w={15} /></Combo>
          <LightButton $w={16}><Magnifier s={13} /></LightButton>
          <Lead $w={36} $ml={2}><Fit w={34}>코스피</Fit></Lead>
          <BlueButton $w={31} $ml={374}><Fit w={23}>전체</Fit></BlueButton>
          {periods.map(([t, w, ml], i) => <BlueButton key={t} $w={w} $ml={ml} $on={i === 0}><Fit w={11}>{t}</Fit></BlueButton>)}
          <Combo $w={45} $ml={1}><Fit w={5} ml={3}>1</Fit><Drop /></Combo>
          <BlueButton $w={32} $ml={1}><Fit w={23}>조회</Fit></BlueButton>
          <BlueButton $w={52} $ml={1}><Fit w={48}>차트저장</Fit></BlueButton>
          <SoftButton $w={20} $ml={1}><Gear c="#fff" s={11} hole="#5c86a8" /></SoftButton>
        </Controls>
        <Controls $h={24} $pt={0}>
          <Lead $w={40} $ml={8}><Fit w={35}>동기화</Fit></Lead>
          <SoftButton $w={36}><Fit w={22}>종목</Fit></SoftButton>
          <SoftButton $w={36} $ml={1}><Fit w={22}>주기</Fit></SoftButton>
          <SoftButton $w={36} $ml={2}><Fit w={22}>복사</Fit></SoftButton>
          <QuoteBox $w={367} $ml={3}>
            <QuoteCell $w={59}><Fit w={48} ml={5}>JS:AM:00</Fit></QuoteCell>
            <QuoteCell $w={185}>
              <Fit w={48} ml={9} c="#1010f0">6,471.17</Fit>
              <Space $w={14} /><svg width="9" height="8" viewBox="0 0 9 8"><path d="M0 0h9L4.500 8z" fill="#3838ff" /></svg>
              <Fit w={36} ml={2} c="#1010f0">398.66</Fit><Fit w={36} ml={27} c="#1010f0">-5.80%</Fit>
            </QuoteCell>
            <QuoteCell $w={45}><Fit w={36} ml={4}>거래량</Fit></QuoteCell>
            <QuoteCell $w={73} $last><Fit w={42} ml={29}>302,072</Fit></QuoteCell>
          </QuoteBox>
          <Combo $w={66} $ml={2}><Swatch /><Fit w={5} ml={9}>1</Fit><Drop $flat /></Combo>
          <BlueButton $w={18} $ml={1}><Fit w={7}>+</Fit></BlueButton>
          <BlueButton $w={41} $ml={1}><Fit w={16}>1x1</Fit></BlueButton>
          <BlueButton $w={69} $ml={1}><Fit w={48}>화면연결</Fit></BlueButton>
          <OrangeButton $w={20} $ml={1}><svg width="15" height="15" viewBox="0 0 15 15"><path d="M1 14l2-4 7-8q3-2 4 0t-1 4l-6 6-4 1z" fill="#432c10" /><path d="M3 12l4-4" stroke="#f3b65e" /></svg></OrangeButton>
        </Controls>
        <Workspace>
          <ChartColumn>
            <ChartTitle><Fit w={39} b>코스피</Fit><Fit w={33} ml={910} b>(1일)</Fit></ChartTitle>
            <PricePane />
            <VolumePane />
            <MacdPane />
            <TimeAxis />
            <ScrollRow>
              <Raised $w={17} $h={17}><Arrow d="M7 1v8L3 5z" /></Raised>
              <Track $w={479} $h={17} />
              <Raised $w={208} $h={17} />
              <Raised $w={17} $h={17}><Arrow d="M3 1v8l4-4z" /></Raised>
              <Space $w={5} />
              <svg width="96" height="16" viewBox="0 0 96 16">
                <path d="M1 4.500h92" stroke="#999" strokeWidth="3" /><path d="M2 4.800h90" stroke="#fff" />
                <path d="M63 1h4v6l-2 3-2-3z" fill="#eee" stroke="#888" strokeWidth=".8" />
                <path d="M1 14.500h95" stroke="#111" strokeWidth="2" strokeDasharray="1 3" /><path d="M1 15.500h95" stroke="#111" strokeDasharray="1 1" /><path d="M1.500 12v4" stroke="#111" />
              </svg>
              <CountBox $w={38} $ml={4} $h={16}><Fit w={17} ml={2}>152</Fit></CountBox>
              <Raised $w={18} $ml={1} $h={17}><Arrow d="M10 0v10L0 5z" /></Raised>
              <Raised $w={18} $h={17}><Arrow d="M0 0h10v10H0z" /></Raised>
              <Raised $w={18} $h={17}><Arrow d="M0 0v10l10-5z" /></Raised>
              <Space $w={1} />
              <Magnifier s={17} sign="M4.500 7h5M7 4.500v5" /><Magnifier s={18} sign="M4.500 7h5" /><Magnifier s={18} sign="M5.500 10l1-5h1l1 5M6 8h2" />
              <Raised $w={17} $h={17}><svg width="14" height="14" viewBox="0 0 14 14"><path d="M3 1l2 2-2 2-2-1q0 4 4 4l6 5 2-2-5-5q0-5-5-5z" fill="#ddd" stroke="#444" /></svg></Raised>
            </ScrollRow>
          </ChartColumn>
          <ToolStrip>
            <StripButton $h={18}><Fit w={5} b size={12}>A</Fit></StripButton>
            <ToolCell $h={3} /><Rule />
            {tools.map((t, i) => <ToolCell key={i} $h={20}><ToolIcon tool={t} /></ToolCell>)}
            <ToolCell $h={8} />
            <StripButton $h={13}><Arrow d="M0 3h10L5 8z" s={9} /></StripButton>
          </ToolStrip>
        </Workspace>
        <StatusBar>
          <Orb />
          <LightButton $w={15} $ml={990} $h={13}><svg width="13" height="11" viewBox="0 0 13 11"><path d="M1 1h9v7H1z" fill="#fff" stroke="#444" /><path d="M9.500 4v6M6.500 7h6" stroke="#222" strokeWidth="2" /></svg></LightButton>
        </StatusBar>
      </Win>

      <Ticker $h={21}>
        <Grip />
        <TickerLabel $w={67} $ml={5} $h={17}><Fit w={40} b>{'종   합'}</Fit></TickerLabel>
        <TickerBody $w={232} $h={17}><Quote last="6471.17" ml={6} lw={42} diff="398.66" diffW={36} rate="-5.80%" /></TickerBody>
        <TickerDrop $w={18} $h={17} />
        <TickerLabel $w={67} $ml={4} $h={17}><Fit w={40} b>{'선   물'}</Fit></TickerLabel>
        <TickerBody $w={232} $h={17}><Quote last="1016.25" ml={6} lw={42} diff="62.00" diffW={30} rate="-5.75%" /></TickerBody>
        <TickerDrop $w={18} $h={17} />
        <TickerBody $w={301} $ml={4} $h={17}><Fit w={34} ml={5}>[ NP ]</Fit><Fit w={249} ml={8}>임미애 "최고위 후보 중도사퇴, '압력 · 거래'</Fit></TickerBody>
        <TickerDrop $w={17} $h={17} />
        <GreyButton $w={36} $ml={5} $h={17}><Fit w={23}>지수</Fit></GreyButton>
      </Ticker>
      <Ticker $h={25}>
        <Grip />
        <TickerLabel $w={67} $ml={5} $h={19}><Fit w={38} b>코스닥</Fit></TickerLabel>
        <TickerBody $w={232} $h={19}><Quote last="824.46" ml={6} lw={36} diff="9.74" diffW={24} rate="-1.17%" /></TickerBody>
        <TickerDrop $w={18} $h={19} />
        <TickerLabel $w={67} $ml={4} $h={19}><Fit w={35} b>KP200</Fit></TickerLabel>
        <TickerBody $w={232} $h={19}><Quote last="1012.61" ml={6} lw={42} diff="69.39" diffW={30} rate="-6.41%" /></TickerBody>
        <TickerDrop $w={18} $h={19} />
        <TickerLabel $w={68} $ml={4} $h={19}><Fit w={39} b>거래소</Fit></TickerLabel>
        <TickerBody $w={233} $h={19}>
          <Share $w={43} $bg="#d82038"><Fit w={35}>171(3)</Fit></Share>
          <Share $w={8} $bg="#48a818"><Fit w={12}>32</Fit></Share>
          <Share $w={180} $bg="#6488dc"><Fit w={36}>703(0)</Fit></Share>
        </TickerBody>
        <TickerDrop $w={17} $h={19} />
        <GreyButton $w={36} $ml={5} $h={19}><Fit w={23}>설정</Fit></GreyButton>
      </Ticker>
    </Page>
  );
}
